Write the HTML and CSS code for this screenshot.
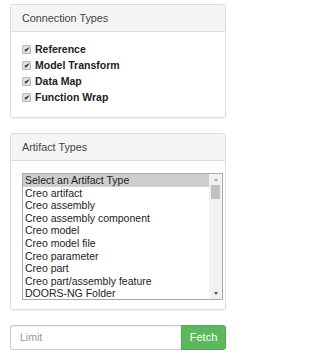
FILE: index.html
```html
<!DOCTYPE html>
<html>
<head>
<meta charset="utf-8">
<link rel="stylesheet" href="styles.css">
</head>
<body>
<div class="page">
  <div class="panel panel-conn">
    <div class="panel-heading">Connection Types</div>
    <div class="panel-body conn-body">
      <label class="check"><span class="box">&#10004;</span>Reference</label>
      <label class="check"><span class="box">&#10004;</span>Model Transform</label>
      <label class="check"><span class="box">&#10004;</span>Data Map</label>
      <label class="check"><span class="box">&#10004;</span>Function Wrap</label>
    </div>
  </div>

  <div class="panel panel-art">
    <div class="panel-heading">Artifact Types</div>
    <div class="panel-body art-body">
      <div class="listbox">
        <div class="options">
          <div class="opt selected">Select an Artifact Type</div>
          <div class="opt">Creo artifact</div>
          <div class="opt">Creo assembly</div>
          <div class="opt">Creo assembly component</div>
          <div class="opt">Creo model</div>
          <div class="opt">Creo model file</div>
          <div class="opt">Creo parameter</div>
          <div class="opt">Creo part</div>
          <div class="opt">Creo part/assembly feature</div>
          <div class="opt">DOORS-NG Folder</div>
        </div>
        <div class="scrollbar">
          <div class="arrow up"></div>
          <div class="track"><div class="thumb"></div></div>
          <div class="arrow down"></div>
        </div>
      </div>
    </div>
  </div>

  <div class="input-group">
    <div class="input">Limit</div>
    <div class="btn">Fetch</div>
  </div>
</div>
</body>
</html>
```

FILE: styles.css
```css
html, body {
  margin: 0;
  padding: 0;
  background: #fff;
}
body {
  font-family: "Liberation Sans", Arial, sans-serif;
  color: #333;
  font-size: 10.5px;
}
.page {
  width: 216px;
  padding: 4px 0 0 10px;
  display: flex;
  flex-direction: column;
}
.panel {
  border: 1px solid #ddd;
  border-radius: 3px;
  background: #fff;
  box-shadow: 0 1px 1px rgba(0,0,0,0.05);
  overflow: hidden;
}
.panel-heading {
  background: #f5f5f5;
  border-bottom: 1px solid #ddd;
  height: 26px;
  line-height: 27px;
  padding-left: 11px;
  font-size: 10.8px;
  color: #444;
}
.conn-body {
  padding: 9px 11px 12px 11px;
  display: flex;
  flex-direction: column;
}
.check {
  display: flex;
  align-items: center;
  height: 16px;
  font-weight: bold;
  font-size: 10.5px;
  color: #222;
}
.box {
  width: 7px;
  height: 7px;
  border: 1px solid #b5b5b5;
  border-radius: 1px;
  background: #e4e4e4;
  margin-right: 4px;
  font-size: 7px;
  line-height: 7px;
  text-align: center;
  color: #333;
  font-weight: bold;
  overflow: hidden;
}
.panel-art {
  margin-top: 15px;
}
.art-body {
  padding: 12px 3px 9px 11px;
}
.listbox {
  width: 199px;
  height: 125px;
  border: 1px solid #a9a9a9;
  display: flex;
  background: #fff;
}
.options {
  flex: 1;
  display: flex;
  flex-direction: column;
  overflow: hidden;
}
.opt {
  height: 12.6px;
  line-height: 12.6px;
  padding-left: 2px;
  white-space: nowrap;
  color: #222;
  font-size: 10.5px;
}
.opt.selected {
  background: #cecece;
}
.scrollbar {
  width: 13px;
  background: #f1f1f1;
  display: flex;
  flex-direction: column;
}
.arrow {
  height: 11px;
  display: flex;
  align-items: center;
  justify-content: center;
}
.arrow.up::before {
  content: "";
  border-left: 2.5px solid transparent;
  border-right: 2.5px solid transparent;
  border-bottom: 3px solid #a3a3a3;
}
.arrow.down::before {
  content: "";
  border-left: 2.5px solid transparent;
  border-right: 2.5px solid transparent;
  border-top: 3px solid #505050;
}
.track {
  flex: 1;
  padding: 0 2px;
}
.thumb {
  height: 14px;
  background: #c1c1c1;
}
.input-group {
  margin-top: 15px;
  display: flex;
  height: 25px;
}
.input {
  flex: 1;
  border: 1px solid #ccc;
  border-right: none;
  border-radius: 3px 0 0 3px;
  padding-left: 9px;
  line-height: 23px;
  color: #999;
  font-size: 10.5px;
  box-shadow: inset 0 1px 1px rgba(0,0,0,0.075);
}
.btn {
  width: 45px;
  background: #5cb85c;
  border: 1px solid #4cae4c;
  border-radius: 0 3px 3px 0;
  color: #fff;
  font-size: 11px;
  line-height: 23px;
  text-align: center;
  box-sizing: border-box;
}
```
